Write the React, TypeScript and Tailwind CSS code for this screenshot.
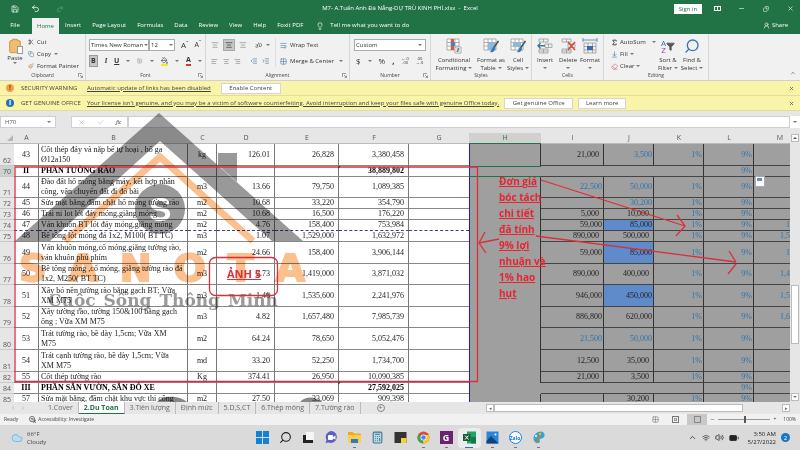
import type { ReactNode } from "react";
import {
  AlignCenter, AlignLeft, AlignRight, Battery, Calculator, ChevronUp, Clipboard, Cloud, Copy, Eraser,
  Grid2x2, IndentDecrease, IndentIncrease, Lightbulb, Minus, PaintBucket, Paintbrush, Redo2, Save,
  Scissors, Search, Undo2, UserRound, Volume2, Wifi, X, Check, Filter, Sigma, ArrowDownToLine, WrapText,
} from "lucide-react";

type Row = {
  n: number;
  tall?: boolean;
  section?: boolean;
  a: string;
  b: string[];
  c?: string;
  d?: string;
  e?: string;
  f: string;
  i?: string;
  j?: string;
  k?: string;
  m?: string;
  blue?: string;
  fill?: boolean;
};

const rows: Row[] = [
  { n: 62, tall: true, a: "43", b: ["Cốt thép đáy và nắp bể tự hoại , hố ga", "Ø12a150"], c: "kg", d: "126.01", e: "26,828", f: "3,380,458", i: "21,000", j: "3,500", k: "1%", blue: "j" },
  { n: 70, section: true, a: "II", b: ["PHẦN TƯỜNG RÀO"], f: "38,889,802" },
  { n: 71, tall: true, a: "44", b: ["Đào đất hố móng bằng máy, kết hợp nhân", "công, vận chuyển đất đi đổ bãi"], c: "m3", d: "13.66", e: "79,750", f: "1,089,385", i: "22,500", j: "50,000", k: "1%", blue: "ij" },
  { n: 72, a: "45", b: ["Sửa mặt bằng,đầm chặt hố móng tường rào"], c: "m2", d: "10.68", e: "33,220", f: "354,790", j: "30,200", k: "1%", blue: "j" },
  { n: 73, a: "46", b: ["Trải ni lot lót đáy móng,giằng móng"], c: "m2", d: "10.68", e: "16,500", f: "176,220", i: "5,000", j: "10,000", k: "1%" },
  { n: 74, a: "47", b: ["Ván khuôn BT lót đáy móng,giằng móng"], c: "m2", d: "4.76", e: "158,400", f: "753,984", i: "59,000", j: "85,000", k: "1%", m: "1", fill: true },
  { n: 75, a: "48", b: ["Bê tông lót móng đá 1x2, M100( BT TC)"], c: "m3", d: "1.07", e: "1,529,000", f: "1,632,972", i: "890,000", j: "500,000", k: "1%", m: "1,5" },
  { n: 76, tall: true, a: "49", b: ["Ván khuôn móng,cổ móng,giằng tường rào,", "ván khuôn phủ phím"], c: "m2", d: "24.66", e: "158,400", f: "3,906,144", i: "59,000", j: "85,000", k: "1%", m: "1", fill: true },
  { n: 77, tall: true, a: "50", b: ["Bê tông móng ,cổ móng, giằng tường rào đá", "1x2, M250( BT TC)"], c: "m3", d: "2.73", e: "1,419,000", f: "3,871,032", i: "890,000", j: "400,000", k: "1%", m: "1,4" },
  { n: 78, tall: true, a: "51", b: ["Xây bó nền tường rào bằng gạch BT; Vữa", "XM M75"], c: "m3", d: "1.46", e: "1,535,600", f: "2,241,976", i: "946,000", j: "450,000", k: "1%", m: "1,5", fill: true },
  { n: 79, tall: true, a: "52", b: ["Xây tường rào, tường 150&100 bằng gạch", "ống ; Vữa XM M75"], c: "m3", d: "4.82", e: "1,657,480", f: "7,985,739", i: "886,800", j: "620,000", k: "1%", m: "1,6" },
  { n: 80, tall: true, a: "53", b: ["Trát tường rào, bề dày 1,5cm; Vữa XM", "M75"], c: "m2", d: "64.24", e: "78,650", f: "5,052,476", i: "21,500", j: "50,000", k: "1%", blue: "ij" },
  { n: 81, tall: true, a: "54", b: ["Trát cạnh tường rào, bề dày 1,5cm; Vữa", "XM M75"], c: "md", d: "33.20", e: "52,250", f: "1,734,700", i: "12,500", j: "35,000", k: "1%" },
  { n: 82, a: "55", b: ["Cốt thép tường rào"], c: "Kg", d: "374.41", e: "26,950", f: "10,090,385", i: "21,000", j: "3,500", k: "1%" },
  { n: 84, section: true, a: "III", b: ["PHẦN SÂN VƯỜN, SÂN ĐỖ XE"], f: "27,592,025" },
  { n: 85, a: "57", b: ["Sửa mặt bằng, đầm chặt khu vực thi công"], c: "m2", d: "27.50", e: "33,069", f: "909,398", j: "30,200", k: "1%" },
];

const columns = ["A", "B", "C", "D", "E", "F", "G", "H", "I", "J", "K", "L", "M"];
const menu = ["Insert", "Page Layout", "Formulas", "Data", "Review", "View", "Help", "Foxit PDF"];

function rowHeight(row: Row) {
  if (!row.tall) return "h-[11px]";
  return [71, 77, 79].includes(row.n) ? "h-[21px]" : "h-[22px]";
}

function Caret() {
  return <span className="inline-block border-x-2 border-t-2 border-x-transparent border-t-[#777]" />;
}

function Group({ label, width, launcher, children }: { label: string; width: string; launcher?: boolean; children: ReactNode }) {
  return (
    <section className={`relative flex shrink-0 flex-col border-r border-[#d6d6d6] ${width}`}>
      <div className="flex flex-1 items-start pt-1">{children}</div>
      <div className="h-2 text-center text-[5px] leading-[6px] text-[#444]">{label}</div>
      {launcher && (
        <svg className="absolute right-0.5 bottom-0.5 size-[5px]" viewBox="0 0 5 5" fill="none" stroke="#777" strokeWidth="0.7">
          <path d="M0.5 4V0.5H4M2 2l2.5 2.5M4.5 2.5v2h-2" />
        </svg>
      )}
    </section>
  );
}

function BigButton({ icon, lines, width }: { icon: ReactNode; lines: string[]; width: string }) {
  return (
    <button className={`flex shrink-0 flex-col items-center leading-[8px] whitespace-nowrap ${width}`}>
      <span className="flex h-4 items-center">{icon}</span>
      <span className="mt-0.5">{lines[0]}</span>
      <span className="flex h-2 items-center gap-0.5">{lines[1]} <Caret /></span>
    </button>
  );
}

function CellsIcon({ kind }: { kind: "insert" | "delete" | "format" | "cond" | "table" | "style" }) {
  return (
    <svg className="size-4" viewBox="0 0 16 16" fill="none" stroke="#9a9a9a" strokeWidth="0.8">
      {kind === "format" && (
        <>
          <path d="M1 2h14M1 0v4M15 0v4" stroke="#3f7fb5" />
          <path d="M2 5h12v10H2zM2 8.500h12M2 12h12M6 5v10M10.500 5v10" />
          <path d="M5 8h6v4H5z" fill="#2f6db0" stroke="none" />
        </>
      )}
      {(kind === "insert" || kind === "delete") && (
        <>
          <path d="M2 1h9v3H2zM6.500 1v3M2 11h9v4H2zM6.500 11v4M2 13h9M8 6h7v3.500H8zM11.500 6v3.500" />
          {kind === "insert" ? <path d="M8 7.700H1M3.500 5L1 7.700l2.500 2.700" stroke="#2f7db0" strokeWidth="1.4" /> : <path d="M8 4l7 8M15 4l-7 8" stroke="#d9493a" strokeWidth="1.6" />}
        </>
      )}
      {(kind === "cond" || kind === "table" || kind === "style") && (
        <>
          <path d="M1 1h12v11H1z" fill="#fff" />
          <path d="M1 4.500h12M1 8h12M5 1v11M9 1v11" />
          {kind === "cond" && (
            <>
              <path d="M5 1h3v4H5zM5 8h3v4H5z" fill="#d65a45" stroke="none" />
              <path d="M5 4.500h4V8H5z" fill="#4a7fbd" stroke="none" />
              <path d="M9 9h6v6H9z" fill="#fff" /><path d="M10.500 11h3M10.500 13h3M13 10l-2 4" stroke="#555" />
            </>
          )}
          {kind !== "cond" && (
            <>
              <path d={kind === "table" ? "M5 4.500h8V12H5z" : "M3 4h8v5H3z"} fill="#8db9dd" stroke="none" />
              <path d="M15.500 3l-5 7" stroke="#555" strokeWidth="1.6" />
              <path d="M11 9c-2 0-2 3-4 5 3 1 5-1 5-4z" fill="#3a76b5" stroke="none" />
            </>
          )}
        </>
      )}
    </svg>
  );
}

function Ribbon() {
  return (
    <div className="flex h-[47px] shrink-0 border-b border-[#d0d0d0] bg-[#f1f1f1] text-[6px] text-[#333]">
      <Group label="Clipboard" width="w-[86px]" launcher>
        <button className="flex w-[28px] flex-col items-center pl-0.5 leading-[8px]">
          <span className="relative">
            <Clipboard size={16} fill="#efbd6b" color="#cf9a4a" strokeWidth={1.5} />
            <span className="absolute right-0 bottom-0 h-2 w-1.5 border border-[#999] bg-white" />
          </span>
          Paste
          <Caret />
        </button>
        <div className="flex flex-col gap-1 leading-[8px] whitespace-nowrap">
          <button className="flex items-center gap-[3px]"><Scissors size={6} /> Cut</button>
          <button className="flex items-center gap-[3px]"><Copy size={6} color="#4f7ba8" /> Copy <Caret /></button>
          <button className="flex items-center gap-[3px]"><Paintbrush size={6} color="#b98242" /> Format Painter</button>
        </div>
      </Group>
      <Group label="Font" width="w-[120px]" launcher>
        <div className="w-full px-[3px] pt-px">
          <div className="flex h-3 items-center">
            <span className="relative flex h-full w-[60px] items-center">
              <select aria-label="Font" className="h-full w-full appearance-none border border-[#ababab] bg-white px-px">
                <option>Times New Roman</option>
              </select>
              <span className="absolute right-px bottom-[5px] leading-[0]"><Caret /></span>
            </span>
            <span className="relative flex h-full w-[26px] items-center">
              <select aria-label="Font size" className="h-full w-full appearance-none border border-[#ababab] bg-white px-px">
                <option>12</option>
              </select>
              <span className="absolute right-0.5 bottom-[5px] leading-[0]"><Caret /></span>
            </span>
            <button className="ml-1.5 text-[8px]">A<sup>ˆ</sup></button>
            <button className="ml-1.5 text-[7px]">A<sup>ˇ</sup></button>
          </div>
          <div className="mt-1 flex h-3 items-center gap-[7px] text-[7px]">
            <button className="h-3 w-3 border border-[#9a9a9a] bg-[#c6c6c6] font-bold">B</button>
            <button className="font-serif font-bold italic">I</button>
            <button className="font-bold underline">U</button>
            <Caret />
            <Grid2x2 size={8} color="#999" />
            <Caret />
            <button aria-label="Fill colour" className="border-b-2 border-[#f4ea2a]"><PaintBucket size={7} /></button>
            <Caret />
            <button className="w-2 border-b-2 border-[#e0302a] leading-[8px] font-bold">A</button>
            <Caret />
          </div>
        </div>
      </Group>
      <Group label="Alignment" width="w-[144px]" launcher>
        <div className="w-[70px] border-r border-[#ddd] px-[5px] pt-px">
          <div className="flex h-3 items-center gap-1">
            <AlignCenter size={8} color="#888" />
            <span className="flex size-3 items-center justify-center border border-[#aaa] bg-[#c6c6c6]"><AlignCenter size={8} /></span>
            <AlignCenter size={8} color="#888" />
            <span className="ml-1 -rotate-12 text-[6px]">ab</span>
            <Caret />
          </div>
          <div className="mt-1 flex h-3 items-center gap-[5px]">
            <AlignLeft size={7} color="#777" />
            <AlignCenter size={7} color="#777" />
            <AlignRight size={7} color="#777" />
            <IndentDecrease size={8} color="#4779ab" className="ml-1" />
            <IndentIncrease size={8} color="#4779ab" />
          </div>
        </div>
        <div className="flex flex-col gap-2 pt-[3px] pl-1 leading-[8px] whitespace-nowrap">
          <button className="flex items-center gap-[3px]"><WrapText size={7} color="#4779ab" /> Wrap Text</button>
          <button className="flex items-center gap-[3px]"><Grid2x2 size={7} color="#4779ab" /> Merge &amp; Center <span className="ml-0.5 flex"><Caret /></span></button>
        </div>
      </Group>
      <Group label="Number" width="w-[81px]" launcher>
        <div className="w-full px-1 pt-px">
          <div className="relative flex items-center">
            <select aria-label="Number format" className="h-3 w-full appearance-none border border-[#ababab] bg-white px-px">
              <option>Custom</option>
            </select>
            <span className="absolute right-1 bottom-[5px] leading-[0]"><Caret /></span>
          </div>
          <div className="mt-1 flex h-3 items-center gap-[7px] px-0.5 text-[8px]">
            <button>$</button><Caret /><button>%</button><button className="font-bold">,</button>
            <button className="text-center text-[4px] leading-[4px]">←.0<br />.00</button>
            <button className="text-center text-[4px] leading-[4px]">.00<br />→.0</button>
          </div>
        </div>
      </Group>
      <Group label="Styles" width="w-[101px]">
        <BigButton icon={<CellsIcon kind="cond" />} lines={["Conditional", "Formatting"]} width="w-[46px]" />
        <BigButton icon={<CellsIcon kind="table" />} lines={["Format as", "Table"]} width="w-[28px]" />
        <BigButton icon={<CellsIcon kind="style" />} lines={["Cell", "Styles"]} width="w-[26px]" />
      </Group>
      <Group label="Cells" width="w-[72px]">
        <BigButton icon={<CellsIcon kind="insert" />} lines={["Insert", ""]} width="w-[26px]" />
        <BigButton icon={<CellsIcon kind="delete" />} lines={["Delete", ""]} width="w-[20px]" />
        <BigButton icon={<CellsIcon kind="format" />} lines={["Format", ""]} width="w-[24px]" />
      </Group>
      <Group label="Editing" width="w-[105px]">
        <div className="flex w-[52px] flex-col gap-1 pl-[7px] leading-[8px] whitespace-nowrap">
          <button className="flex items-center gap-0.5"><Sigma size={7} strokeWidth={3} /> AutoSum <span className="ml-1 flex"><Caret /></span></button>
          <button className="flex items-center gap-0.5"><ArrowDownToLine size={7} color="#3b78a8" /> Fill <Caret /></button>
          <button className="flex items-center gap-0.5"><Eraser size={7} color="#d75a6a" /> Clear <Caret /></button>
        </div>
        <BigButton
          icon={<span className="flex items-center"><b className="text-[8px] leading-[7px] font-normal"><span className="text-[#2f6fae]">A</span><br /><span className="text-[#8d45a5]">Z</span></b><Filter size={9} fill="#555" color="#555" /></span>}
          lines={["Sort &", "Filter"]}
          width="w-[24px]"
        />
        <BigButton icon={<Search size={16} color="#3c74b4" className="-scale-x-100" />} lines={["Find &", "Select"]} width="w-[24px]" />
      </Group>
      <div className="flex flex-1 items-end justify-end p-1"><ChevronUp size={6} /></div>
    </div>
  );
}

function Notice({ icon, title, link, children }: { icon: ReactNode; title: string; link: string; children: ReactNode }) {
  return (
    <div className="flex h-[15px] shrink-0 items-center border-b border-[#e3dc9c] bg-[#faf4a8] pl-[6px] text-[6px] text-[#444]">
      {icon}
      <span className="ml-[7px] w-[66px] whitespace-nowrap">{title}</span>
      <a href="#" className="whitespace-nowrap underline">{link}</a>
      {children}
      <button aria-label="Close" className="mr-1.5 ml-auto"><X size={5} strokeWidth={4} color="#666" /></button>
    </div>
  );
}

function Sheet() {
  return (
    <div className="flex min-h-0 flex-1 bg-[#e6e6e6]">
      <div className="min-w-0 flex-1 overflow-hidden">
        <table className="w-full table-fixed border-separate border-spacing-0 font-['Liberation_Serif',serif] text-[8px] leading-[10px] text-[#222]">
          <colgroup>
            <col className="w-[14px]" /><col className="w-[25px]" /><col className="w-[149px]" /><col className="w-[29px]" />
            <col className="w-[58px]" /><col className="w-[64px]" /><col className="w-[70px]" /><col className="w-[60px]" />
            <col className="w-[72px]" /><col className="w-[63px]" /><col className="w-[50px]" /><col className="w-[50px]" />
            <col className="w-[50px]" /><col />
          </colgroup>
          <thead className="font-['Open_Sans',sans-serif] text-[7px] leading-[8px] text-[#555]">
            <tr>
              <th className="h-[11px] border-b border-[#bbb] p-0">
                <svg className="ml-auto size-2" viewBox="0 0 8 8"><path d="M7 1v6H1z" fill="#b5b5b5" /></svg>
              </th>
              {columns.map((c) => (
                <th key={c} className={`h-[11px] border-b p-0 font-normal ${c === "H" ? "border-[#217346] bg-[#d0d0d0] text-[#217346]" : "border-[#bbb]"} ${c === "M" ? "pl-4" : ""}`}>{c}</th>
              ))}
            </tr>
          </thead>
          <tbody>
            {rows.map((r) => {
              const line = r.n === 74 ? "border-b border-b-[#3d3d8f] border-dashed" : "border-b border-b-[#888]";
              const cell = `${line} border-r border-r-[#777] [border-right-style:solid] bg-white p-0`;
              const gray = `border-b border-b-[#444] p-0 ${r.section ? "" : "border-r border-r-[#333]"}`;
              const bold = r.section ? "font-bold text-black" : "";
              return (
                <tr key={r.n}>
                  <th className={`border-b border-[#c9c9c9] p-0 align-bottom font-['Open_Sans',sans-serif] text-[7px] leading-[9px] font-normal text-[#555] ${rowHeight(r)} ${r.n === 70 ? "bg-[#d0d0d0] text-[#217346]" : ""}`}>{r.n}</th>
                  <td className={`${cell} ${bold} text-center`}>{r.a}</td>
                  <td className={`${cell} ${bold} whitespace-nowrap`}>
                    {r.b.map((text) => <div key={text} className="pl-0.5">{text}</div>)}
                  </td>
                  <td className={`${cell} text-center`}>{r.c}</td>
                  <td className={`${cell} pr-1 text-right`}>{r.d}</td>
                  <td className={`${cell} pr-1 text-right`}>{r.e}</td>
                  <td className={`${cell} ${bold} pr-1 text-right`}>{r.f}</td>
                  <td className={`${line} bg-white p-0`} />
                  <td className={`border-l border-l-[#1a1ac8] bg-[#9f9f9f] p-0 ${r.n === 70 ? "border-y border-y-[#217346]" : ""} ${r.section ? "" : "border-r border-r-[#333]"}`} />
                  <td className={`${gray} bg-[#9f9f9f] text-right ${r.n === 74 || r.n === 76 || r.n === 78 || r.n === 79 || r.blue === "ij" ? "pr-px" : "pr-1"} ${r.blue === "ij" ? "text-[#2d74ad]" : ""}`}>{r.i}</td>
                  <td className={`${gray} text-right ${r.fill ? "bg-[#5f8bcb]" : "bg-[#9f9f9f]"} ${r.fill || r.blue || r.n === 79 ? "pr-px" : "pr-1"} ${r.blue ? "text-[#2d74ad]" : ""}`}>{r.j}</td>
                  <td className={`${gray} border-r border-r-[#333] bg-[#9f9f9f] pr-px text-right text-[#2d74ad]`}>{r.k}</td>
                  <td className={`${gray} border-r border-r-[#333] bg-[#9f9f9f] pr-px text-right text-[#2d74ad]`}>9%</td>
                  <td className="border-b border-b-[#444] bg-[#9f9f9f] p-0 text-right text-[#2d74ad]">{r.m}</td>
                </tr>
              );
            })}
          </tbody>
        </table>
      </div>
      <div className="flex w-[10px] flex-col items-center gap-px py-px">
        <button aria-label="Scroll up" className="flex h-2 w-2 items-center justify-center border border-[#bbb] bg-white"><span className="border-x-2 border-b-2 border-x-transparent border-b-[#555]" /></button>
        <div className="flex-[142]" />
        <div className="w-2 flex-[58] border border-[#bbb] bg-white" />
        <div className="flex-[47]" />
        <button aria-label="Scroll down" className="flex h-2 w-2 items-center justify-center border border-[#bbb] bg-white"><Caret /></button>
      </div>
    </div>
  );
}

// Logo watermark and red mark-up drawn on top of the sheet
function Overlay() {
  return (
    <div className="pointer-events-none absolute inset-0 overflow-hidden">
      <div className="absolute inset-0 mix-blend-multiply">
        <svg className="absolute top-0 left-0" width="800" height="450">
          <path d="M159 113L303 241H272L160 141L50 241H15z" fill="#999" />
          <path d="M218 153h19v29l-19-17z" fill="#999" />
          <path d="M65 241L160 157L253 241" fill="none" stroke="#fbc08e" strokeWidth="7" />
          <circle cx="160" cy="209" r="25" fill="#999" />
          <path d="M157 402c5-7 22-7 30 0zM300 402c5-6 15-6 22 0z" fill="#888" />
          <text x="160" y="221" textAnchor="middle" fill="#fff" fontSize="34" fontWeight="700" fontFamily="Liberation Sans, sans-serif">S</text>
        </svg>
        <div className="absolute top-[249px] left-[19px] flex w-[286px] justify-between font-['DejaVu_Sans',sans-serif] text-[38px] leading-[38px] font-bold text-[#fbc08e] [-webkit-text-stroke:2px_#fbc08e]">
          {["S", "A", "N", "O", "T", "A"].map((ch, i) => <span key={i}>{ch}</span>)}
        </div>
        <div className="absolute top-[290px] left-[48px] flex w-[230px] justify-between font-['DejaVu_Serif',serif] text-[17px] leading-[20px] font-bold text-[#999]">
          <span>Cuộc</span><span>Sống</span><span>Thông</span><span>Minh</span>
        </div>
      </div>
      <svg className="absolute top-0 left-0" width="800" height="450" fill="none" stroke="#dc2f38" strokeWidth="1.3">
        <path d="M15 167H477.500V381.500H15z" />
        <rect x="209.500" y="257.500" width="68" height="38" rx="6" />
        <path d="M541 180L685 226M677 215l8 11l-9 10M536 236L736 262M729 251l7 11M736 264l-8 10M499 239L479 243M485 232l-6 11l7 10" />
        <path d="M338 166h3l-3 3z" fill="#2d5a2d" stroke="none" />
        <path d="M338 382h3l-3 3z" fill="#2d5a2d" stroke="none" />
      </svg>
      <p className="absolute top-[267px] left-[227px] text-[11px] leading-[14px] font-bold text-[#dc2f38] underline">ẢNH 5</p>
      <p className="absolute top-[173px] left-[499px] text-[10px] leading-[16px] font-bold whitespace-nowrap text-[#e8252f] underline">
        Đơn giá<br />bóc tách<br />chi tiết<br />đã tính<br />9% lợi<br />nhuận và<br />1% hao<br />hụt
      </p>
      <div className="absolute top-[176px] left-[755px] h-[11px] w-[10px] border border-[#aaa] bg-white p-px">
        <div className="h-[3px] w-[5px] bg-[#6f8bb5]" />
      </div>
    </div>
  );
}

function SheetTabs() {
  const tabs = ["1.Cover", "2.Du Toan", "3.Tiên lượng", "Định mức", "5.D,S,CT", "6.Thép móng", "7.Tường rào"];
  return (
    <div className="flex h-3 shrink-0 items-center bg-[#e6e6e6] text-[7px] leading-[10px] text-[#666]">
      <div className="flex w-[43px] gap-2 pl-3 text-[#aaa]"><span>‹</span><span>›</span></div>
      <nav className="flex h-full whitespace-nowrap">
        {tabs.map((t, i) => (
          <button key={t} className={`border-r border-[#bbb] px-[5px] ${i === 1 ? "border-b border-b-[#217346] bg-white font-bold text-[#217346]" : ""}`}>{t}</button>
        ))}
      </nav>
      <button aria-label="New sheet" className="ml-4 flex size-2 items-center justify-center rounded-full border border-[#888] text-[7px]">+</button>
      <div className="ml-auto flex w-[314px] items-center pr-[10px]">
        <button aria-label="Scroll left" className="h-2 w-2 border border-[#bbb] bg-white text-[5px] leading-[6px]">◂</button>
        <div className="h-2 w-[249px] border border-[#bbb] bg-white" />
        <button aria-label="Scroll right" className="ml-auto h-2 w-2 border border-[#bbb] bg-white text-[5px] leading-[6px]">▸</button>
      </div>
    </div>
  );
}

function StatusBar() {
  return (
    <div className="flex h-[11px] shrink-0 items-center bg-[#f1f1f1] pr-1 pl-1 text-[5px] text-[#444]">
      <span>Ready</span>
      <svg className="mr-0.5 ml-[11px] size-[7px]" viewBox="0 0 8 8" fill="none" stroke="#555" strokeWidth="0.9"><circle cx="3.500" cy="3.500" r="3" /><path d="M2 3h3M3.500 3v2M5 4l3 4M8 4L5 8" /></svg>
      <span>Accessibility: Investigate</span>
      <div className="ml-auto flex h-full items-center">
        <Grid2x2 size={7} color="#777" className="mr-[13px]" />
        <span className="mr-[8px] size-[7px] border border-[#777] p-px"><span className="block h-full border border-[#999]" /></span>
        <span className="flex h-full w-5 items-center justify-center bg-[#c8c8c8]"><span className="size-[7px] border border-[#888]" /></span>
        <Minus size={5} className="mx-[3px]" />
        <span className="relative h-px w-[52px] bg-[#999]"><span className="absolute -top-[3px] left-1/2 h-[7px] w-0.5 bg-[#555]" /></span>
        <span className="mx-[3px]">+</span>
        <span className="ml-1">100%</span>
      </div>
    </div>
  );
}

const icon = "size-[13px]";
const apps: { name: string; art: ReactNode; open?: boolean }[] = [
  { name: "Start", art: <svg className={icon} viewBox="0 0 13 13" fill="#1482d4"><path d="M0 0h6v6H0zM7 0h6v6H7zM0 7h6v6H0zM7 7h6v6H7z" /></svg> },
  { name: "Search", art: <Search size={13} color="#222" className="-scale-x-100" /> },
  { name: "Task view", art: <svg className={icon} viewBox="0 0 13 13"><path d="M4 1h8v8H4z" fill="#f5f5f5" /><path d="M1 4h3v5h7v3H1z" fill="#222" /></svg> },
  { name: "Chat", art: <svg className={icon} viewBox="0 0 13 13"><path d="M6.500 0a6 6 0 1 1-3 11.500L0.500 12l1-3A6 6 0 0 1 6.500 0" fill="#5b5fc7" /><rect x="3" y="4" width="5" height="5" rx="1" fill="#fff" /><path d="M8 6l2.500-1.500v4L8 7.500z" fill="#fff" /></svg> },
  { name: "Files", open: true, art: <svg className={icon} viewBox="0 0 13 13"><path d="M0 1h5l1 1.500h7V12H0z" fill="#f0a922" /><path d="M0 4h13v8H0z" fill="#fbcf4a" /><path d="M3 8h7v4H3z" fill="#2c7cc4" /></svg> },
  { name: "Calculator", art: <Calculator size={13} color="#3b7893" fill="#bcd9e6" /> },
  { name: "Sticky Notes", art: <svg className={icon} viewBox="0 0 13 13"><path d="M0.500 1h12v11h-12z" fill="#333" /><path d="M7 7h5.500v5H7z" fill="#f5d330" /></svg> },
  { name: "Chrome", open: true, art: <svg className={icon} viewBox="0 0 13 13"><circle cx="6.500" cy="6.500" r="6" fill="#e04a3a" /><path d="M6.500 6.500L1.300 3.500a6 6 0 0 0 4.700 9z" fill="#3aa757" /><path d="M6.500 6.500L6 12.500A6 6 0 0 0 12 4H6.500z" fill="#f7c62d" /><circle cx="6.500" cy="6.500" r="3" fill="#fff" /><circle cx="6.500" cy="6.500" r="2.300" fill="#4285f4" /></svg> },
  { name: "Foxit", open: true, art: <span className="flex size-[13px] items-center justify-center bg-[#6b2271] text-[9px] font-bold text-white">G</span> },
  { name: "Excel", open: true, art: <svg className={icon} viewBox="0 0 13 13"><path d="M4 0.500h9v12H4z" fill="#21a366" /><path d="M8 6h5v6.500H8z" fill="#107c41" /><path d="M0 3h7.500v7H0z" fill="#185c37" /><path d="M2 4.500l3.500 4M5.500 4.500L2 8.500" stroke="#fff" /></svg> },
  { name: "Photos", open: true, art: <svg className={icon} viewBox="0 0 13 13"><path d="M0.500 0.500h12v12h-12z" fill="#2886d8" /><path d="M0.500 10L5 5l7.500 7.500h-12z" fill="#153f78" /><circle cx="9.500" cy="3.500" r="1" fill="#fff" /></svg> },
  { name: "Zalo", open: true, art: <span className="flex size-[13px] items-center justify-center rounded-full border border-[#1688e8] bg-white text-[5px] font-bold text-[#1678e0]">Zalo</span> },
  { name: "Paint", open: true, art: <svg className={icon} viewBox="0 0 13 13"><path d="M6 1c5-2 8 2 6 5-1 2-3 1-4 2s1 4-2 4C1 12-1 5 6 1" fill="#35a5cd" /><path d="M9 2L4 12" stroke="#c87b3a" strokeWidth="1.500" /><circle cx="4" cy="5" r="1" fill="#fff" /><circle cx="8" cy="3" r="1" fill="#f5d330" /></svg> },
];

function Taskbar() {
  return (
    <div className="grid h-[25px] shrink-0 grid-cols-[1fr_auto_1fr] items-center bg-[#dadada] text-[6px] leading-[8px] text-[#444]">
      <div className="flex items-center gap-1 pl-[11px]">
        <Cloud size={12} color="#7cb8de" fill="#b9dcf2" />
        <div>66°F<br />Cloudy</div>
      </div>
      <div className="flex">
        {apps.map((app) => (
          <button key={app.name} aria-label={app.name} className={`relative flex h-5 w-[23px] items-center justify-center rounded-sm ${app.name === "Excel" ? "bg-[#ececec]" : ""}`}>
            {app.art}
            {app.open && <span className={`absolute bottom-0 h-px ${app.name === "Excel" ? "w-2 bg-[#1976c5]" : "w-[3px] bg-[#777]"}`} />}
          </button>
        ))}
      </div>
      <div className="flex items-center justify-end gap-[5px] pr-[10px] text-[#222]">
        <ChevronUp size={9} />
        <Wifi size={8} />
        <Volume2 size={9} />
        <Battery size={10} fill="#222" />
        <div className="ml-1 text-right">3:50 AM<br />5/27/2022</div>
        <span className="flex size-[9px] items-center justify-center rounded-full bg-[#1976c5] text-[6px] text-white">2</span>
      </div>
    </div>
  );
}

export default function App() {
  return (
    <div className="relative flex h-screen flex-col overflow-hidden bg-[#e6e6e6] font-['Open_Sans','Noto_Sans',sans-serif]">
      <header className="shrink-0 bg-[#217346] text-[6px] text-white">
        <div className="grid h-[17px] grid-cols-[1fr_auto_1fr] items-center">
          <div className="flex items-center gap-2 pl-[11px]">
            <Save size={8} /><Undo2 size={9} className="ml-1" /><Redo2 size={8} className="ml-2 opacity-30" />
          </div>
          <div className="whitespace-nowrap">M7- A.Tuấn Anh Đà Nẵng-DỰ TRÙ KINH PHÍ.xlsx &nbsp;-&nbsp; Excel</div>
          <div className="flex items-center justify-end pr-1.5">
            <button className="mr-3 h-[10px] w-7 bg-white leading-[10px] text-[#217346]">Sign in</button>
            <span className="mr-[17px] flex h-[5px] w-[7px] items-center justify-center border border-white"><span className="h-[3px] w-px bg-white" /></span>
            <Minus size={7} className="mr-[18px]" /><Copy size={6} className="mr-[18px] -scale-x-100" /><X size={7} />
          </div>
        </div>
        <nav className="flex h-[17px] items-center whitespace-nowrap">
          <button className="w-8 pr-0.5">File</button>
          <button className="mt-px h-4 w-[27px] bg-[#f1f1f1] text-[#217346]">Home</button>
          <div className="ml-[6px] flex gap-[11px]">{menu.map((m) => <button key={m}>{m}</button>)}</div>
          <Lightbulb size={8} className="ml-[13px]" />
          <span className="ml-[6px]">Tell me what you want to do</span>
          <button className="mr-[12px] ml-auto flex items-center gap-0.5"><UserRound size={7} /> Share</button>
        </nav>
      </header>
      <Ribbon />
      <Notice
        title="SECURITY WARNING"
        link="Automatic update of links has been disabled"
        icon={<span className="flex size-2 items-center justify-center rounded-full bg-[#eda34c] text-[7px] font-bold text-[#8a3b12]">!</span>}
      >
        <button className="ml-[10px] h-[11px] w-[60px] border border-[#d5d5d5] bg-white leading-[9px]">Enable Content</button>
      </Notice>
      <Notice
        title="GET GENUINE OFFICE"
        link="Your license isn't genuine, and you may be a victim of software counterfeiting. Avoid interruption and keep your files safe with genuine Office today."
        icon={<span className="flex size-2 items-center justify-center rounded-full bg-[#2b6fb8] text-[7px] font-bold text-white">i</span>}
      >
        <button className="ml-[5px] h-[11px] w-[69px] border border-[#d5d5d5] bg-white leading-[9px]">Get genuine Office</button>
        <button className="ml-[5px] h-[11px] w-[48px] border border-[#d5d5d5] bg-white leading-[9px]">Learn more</button>
      </Notice>
      <div className="flex h-[22px] shrink-0 items-center text-[6px] text-[#555]">
        <div className="flex h-3 w-[56px] items-center justify-between border border-[#d0d0d0] bg-white px-1">H70 <Caret /></div>
        <div className="ml-[15px] flex h-3 w-[57px] items-center justify-around border border-[#d0d0d0] bg-white">
          <X size={7} color="#aaa" /><Check size={7} color="#aaa" /><i className="font-serif text-[7px]">fx</i>
        </div>
        <input aria-label="Formula" className="h-3 min-w-0 flex-1 border border-[#d0d0d0] bg-white" />
        <span className="flex h-3 w-[10px] items-center justify-center bg-white"><Caret /></span>
      </div>
      <Sheet />
      <SheetTabs />
      <StatusBar />
      <Taskbar />
      <Overlay />
    </div>
  );
}
